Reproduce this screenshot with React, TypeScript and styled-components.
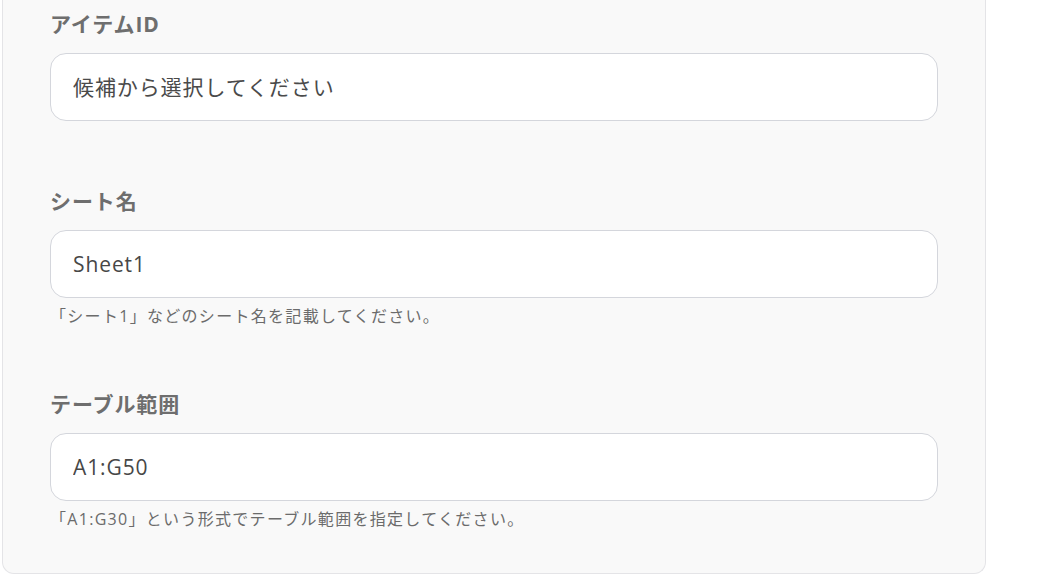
import React from "react";
import styled, { createGlobalStyle } from "styled-components";

const GlobalStyle = createGlobalStyle`
  html, body {
    margin: 0;
    padding: 0;
    background: #ffffff;
  }
  body {
    font-family: "Open Sans", "Noto Sans CJK JP", sans-serif;
  }
`;

const Page = styled.div`
  width: 1055px;
  height: 575px;
  overflow: hidden;
  padding: 0 69px 0 2px;
  box-sizing: border-box;
`;

const Panel = styled.section`
  width: 984px;
  box-sizing: border-box;
  background: #f9f9f9;
  border: 1px solid #e4e4e7;
  border-top: none;
  border-radius: 0 0 12px 12px;
  padding: 9px 47px 43px 47px;
  display: flex;
  flex-direction: column;
`;

const Field = styled.div<{ $gap: number }>`
  display: flex;
  flex-direction: column;
  margin-bottom: ${(p) => p.$gap}px;
`;

const Label = styled.label`
  font-family: "Open Sans", "Noto Sans CJK JP", sans-serif;
  font-size: 21px;
  line-height: 30px;
  font-weight: 700;
  color: #6e6e6e;
  letter-spacing: 0.9px;
  margin-bottom: 14px;
`;

const Input = styled.input`
  box-sizing: border-box;
  width: 888px;
  height: 68px;
  border: 1px solid #d4d6dc;
  border-radius: 16px;
  background: #ffffff;
  padding: 0 22px;
  font-family: "Open Sans", "Noto Sans CJK JP", sans-serif;
  font-size: 21px;
  letter-spacing: 0.9px;
  color: #474747;
  outline: none;
  &::placeholder {
    color: #4a4a4a;
    opacity: 1;
  }
`;

const Help = styled.p`
  margin: 7px 0 0 0;
  font-family: "Open Sans", "Noto Sans CJK JP", sans-serif;
  font-size: 16px;
  line-height: 22px;
  letter-spacing: 1.3px;
  color: #6b6b6b;
`;

export default function App() {
  return (
    <>
      <GlobalStyle />
      <Page>
        <Panel>
          <Field $gap={65}>
            <Label>アイテムID</Label>
            <Input placeholder="候補から選択してください" readOnly />
          </Field>
          <Field $gap={62}>
            <Label>シート名</Label>
            <Input defaultValue="Sheet1" readOnly />
            <Help>「シート1」などのシート名を記載してください。</Help>
          </Field>
          <Field $gap={0}>
            <Label>テーブル範囲</Label>
            <Input defaultValue="A1:G50" readOnly />
            <Help>「A1:G30」という形式でテーブル範囲を指定してください。</Help>
          </Field>
        </Panel>
      </Page>
    </>
  );
}
